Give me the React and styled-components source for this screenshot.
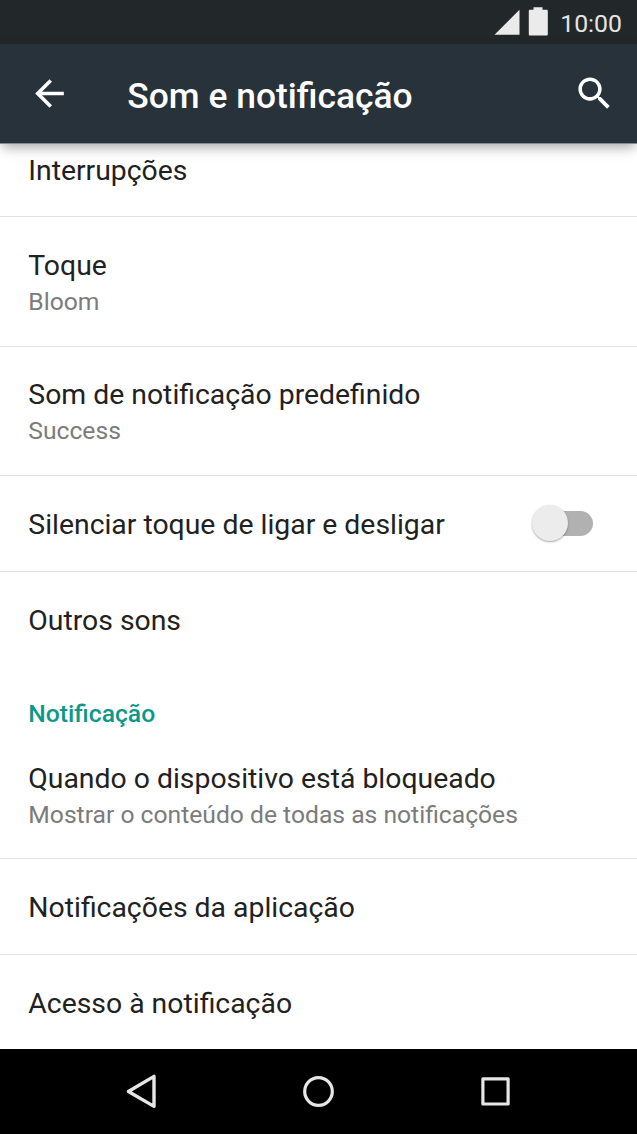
import { useState } from "react";
import styled, { createGlobalStyle } from "styled-components";

const GlobalStyle = createGlobalStyle`
  * {
    box-sizing: border-box;
  }
  body {
    margin: 0;
    background: #ffffff;
    font-family: Roboto, "Noto Sans", sans-serif;
  }
`;

const Screen = styled.div`
  display: flex;
  flex-direction: column;
  width: 637px;
  height: 1134px;
  overflow: hidden;
  background: #ffffff;
`;

const StatusBar = styled.div`
  display: flex;
  align-items: center;
  justify-content: flex-end;
  flex-shrink: 0;
  height: 44px;
  padding-right: 15px;
  background: #22272a;
`;

const Clock = styled.span`
  padding: 3px 0 0 12px;
  font-size: 24.8px;
  line-height: 30px;
  color: #e4e5e5;
`;

const AppBar = styled.header`
  position: relative;
  z-index: 1;
  display: flex;
  align-items: center;
  flex-shrink: 0;
  height: 100px;
  padding: 0 21px 0 28px;
  background: #27323a;
  border-bottom: 1px solid #858a8f;
  box-shadow: 0 5px 12px -2px rgba(0, 0, 0, 0.36);
`;

const IconBtn = styled.button`
  display: flex;
  padding: 0;
  border: 0;
  background: none;
  cursor: pointer;
`;

const Title = styled.h1`
  flex: 1;
  margin: 0;
  padding: 4px 0 0 56.3px;
  font-size: 35.4px;
  font-weight: 500;
  line-height: 42px;
  color: #ffffff;
`;

const List = styled.main`
  flex: 1;
  overflow: hidden;
`;

const Row = styled.div`
  display: flex;
  align-items: flex-start;
  justify-content: space-between;
  height: ${({ $height }) => $height}px;
  padding: ${({ $top }) => $top}px 41px 0 28.3px;
  border-bottom: ${({ $last }) => ($last ? "0" : "1px solid #e3e3e3")};
`;

const RowTitle = styled.div`
  font-size: 28.36px;
  line-height: 36px;
  color: #212121;
  white-space: nowrap;
`;

const RowSummary = styled.div`
  font-size: 24.66px;
  line-height: 35px;
  color: #7b7b7b;
  white-space: nowrap;
`;

const Category = styled.h2`
  height: 84px;
  margin: 0;
  padding: 32px 0 0 28.3px;
  font-size: 24.7px;
  font-weight: 500;
  line-height: 29px;
  color: #0e9888;
`;

const Toggle = styled.button`
  display: flex;
  align-items: center;
  width: 64px;
  height: 38px;
  margin-top: -3px;
  padding: 0;
  border: 0;
  background: none;
  cursor: pointer;
`;

const Track = styled.span`
  display: flex;
  align-items: center;
  justify-content: ${({ $on }) => ($on ? "flex-end" : "flex-start")};
  width: 52px;
  height: 25px;
  margin-left: 9px;
  border-radius: 13px;
  background: ${({ $on }) => ($on ? "#80cbc4" : "#b1b1b1")};
`;

const Thumb = styled.span`
  flex-shrink: 0;
  width: 36px;
  height: 36px;
  margin: 0 -9px;
  border-radius: 50%;
  background: ${({ $on }) => ($on ? "#009688" : "#ececec")};
  box-shadow: 0 1px 2px rgba(0, 0, 0, 0.35);
`;

const NavBar = styled.nav`
  display: flex;
  align-items: center;
  justify-content: center;
  gap: 132px;
  flex-shrink: 0;
  height: 85px;
  background: #000000;
`;

function Item({ title, summary, height, top = 31, last, children }) {
  return (
    <Row $height={height} $top={top} $last={last}>
      <div>
        <RowTitle>{title}</RowTitle>
        {summary && <RowSummary>{summary}</RowSummary>}
      </div>
      {children}
    </Row>
  );
}

function App() {
  const [muted, setMuted] = useState(false);

  return (
    <>
      <GlobalStyle />
      <Screen>
        <StatusBar>
          <svg width="54" height="44" viewBox="0 0 54 44" fill="#ebebeb">
            <path d="M0.5 34.8L25.5 9.8V34.8Z" />
            <path d="M39.5 7.3h9v2.4h4.3a1 1 0 0 1 1 1V34.5a1 1 0 0 1-1 1H35.8a1 1 0 0 1-1-1V10.7a1 1 0 0 1 1-1H39.5Z" />
          </svg>
          <Clock>10:00</Clock>
        </StatusBar>
        <AppBar>
          <IconBtn aria-label="Voltar">
            <svg width="43" height="43" viewBox="0 0 24 24" fill="#ffffff">
              <path d="M20 11H7.8l5.6-5.6L12 4l-8 8 8 8 1.4-1.4L7.8 13H20v-2z" />
            </svg>
          </IconBtn>
          <Title>Som e notificação</Title>
          <IconBtn aria-label="Pesquisar">
            <svg width="43" height="43" viewBox="0 0 24 24" fill="#ffffff">
              <path d="M15.5 14h-.8l-.3-.3c1-1.1 1.6-2.6 1.6-4.2C16 5.9 13.1 3 9.5 3S3 5.9 3 9.5 5.9 16 9.5 16c1.6 0 3.1-.6 4.2-1.6l.3.3v.8l5 5 1.5-1.5-5-5zm-6 0C7 14 5 12 5 9.5S7 5 9.5 5 14 7 14 9.5 12 14 9.5 14z" />
            </svg>
          </IconBtn>
        </AppBar>
        <List>
          <Item title="Interrupções" height={73} top={9} />
          <Item title="Toque" summary="Bloom" height={129.5} />
          <Item
            title="Som de notificação predefinido"
            summary="Success"
            height={129.5}
            top={30.9}
          />
          <Item title="Silenciar toque de ligar e desligar" height={96}>
            <Toggle
              role="switch"
              aria-checked={muted}
              onClick={() => setMuted(!muted)}
            >
              <Track $on={muted}>
                <Thumb $on={muted} />
              </Track>
            </Toggle>
          </Item>
          <Item title="Outros sons" height={95} last />
          <Category>Notificação</Category>
          <Item
            title="Quando o dispositivo está bloqueado"
            summary="Mostrar o conteúdo de todas as notificações"
            height={108}
            top={10}
          />
          <Item title="Notificações da aplicação" height={96} />
          <Item title="Acesso à notificação" height={94} last />
        </List>
        <NavBar>
          <svg width="45" height="45" viewBox="0 0 45 45" fill="none" stroke="#e6e6e6" strokeWidth="3.4" strokeLinejoin="round">
            <path d="M9.4 22.5L35 7.4V37.4Z" />
          </svg>
          <svg width="45" height="45" viewBox="0 0 45 45" fill="none" stroke="#e6e6e6" strokeWidth="3.2">
            <circle cx="22.5" cy="22.5" r="13.8" />
          </svg>
          <svg width="45" height="45" viewBox="0 0 45 45" fill="none" stroke="#e6e6e6" strokeWidth="3.2" strokeLinejoin="round">
            <path d="M9.9 9.8H35.1V35H9.9Z" />
          </svg>
        </NavBar>
      </Screen>
    </>
  );
}

export default App;
